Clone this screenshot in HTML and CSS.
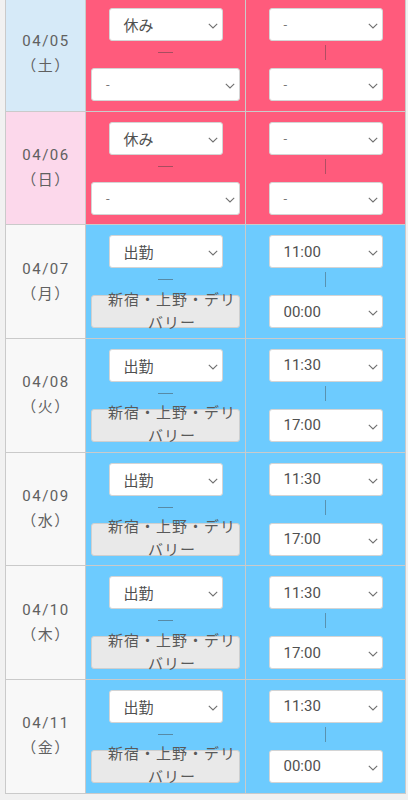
FILE: index.html
```html
<!DOCTYPE html>
<html lang="ja">
<head>
<meta charset="utf-8">
<link rel="stylesheet" href="styles.css">
</head>
<body>
<div class="sheet">
  <div class="date sat"><span>04/05</span><span>（土）</span></div>
  <div class="cell off">
    <div class="sel narrow"><span>休み</span><svg class="chev" viewBox="0 0 10 6"><polyline points="0.8,0.8 5,5 9.2,0.8"/></svg></div>
    <div class="dash"></div>
    <div class="sel wide"><span class="minus">-</span><svg class="chev" viewBox="0 0 10 6"><polyline points="0.8,0.8 5,5 9.2,0.8"/></svg></div>
  </div>
  <div class="cell off">
    <div class="sel narrow"><span class="minus">-</span><svg class="chev" viewBox="0 0 10 6"><polyline points="0.8,0.8 5,5 9.2,0.8"/></svg></div>
    <div class="vline"></div>
    <div class="sel narrow"><span class="minus">-</span><svg class="chev" viewBox="0 0 10 6"><polyline points="0.8,0.8 5,5 9.2,0.8"/></svg></div>
  </div>

  <div class="date sun"><span>04/06</span><span>（日）</span></div>
  <div class="cell off">
    <div class="sel narrow"><span>休み</span><svg class="chev" viewBox="0 0 10 6"><polyline points="0.8,0.8 5,5 9.2,0.8"/></svg></div>
    <div class="dash"></div>
    <div class="sel wide"><span class="minus">-</span><svg class="chev" viewBox="0 0 10 6"><polyline points="0.8,0.8 5,5 9.2,0.8"/></svg></div>
  </div>
  <div class="cell off">
    <div class="sel narrow"><span class="minus">-</span><svg class="chev" viewBox="0 0 10 6"><polyline points="0.8,0.8 5,5 9.2,0.8"/></svg></div>
    <div class="vline"></div>
    <div class="sel narrow"><span class="minus">-</span><svg class="chev" viewBox="0 0 10 6"><polyline points="0.8,0.8 5,5 9.2,0.8"/></svg></div>
  </div>

  <div class="date"><span>04/07</span><span>（月）</span></div>
  <div class="cell on">
    <div class="sel narrow"><span>出勤</span><svg class="chev" viewBox="0 0 10 6"><polyline points="0.8,0.8 5,5 9.2,0.8"/></svg></div>
    <div class="dash"></div>
    <div class="shop">新宿・上野・デリバリー</div>
  </div>
  <div class="cell on">
    <div class="sel narrow"><span>11:00</span><svg class="chev" viewBox="0 0 10 6"><polyline points="0.8,0.8 5,5 9.2,0.8"/></svg></div>
    <div class="vline"></div>
    <div class="sel narrow"><span>00:00</span><svg class="chev" viewBox="0 0 10 6"><polyline points="0.8,0.8 5,5 9.2,0.8"/></svg></div>
  </div>

  <div class="date"><span>04/08</span><span>（火）</span></div>
  <div class="cell on">
    <div class="sel narrow"><span>出勤</span><svg class="chev" viewBox="0 0 10 6"><polyline points="0.8,0.8 5,5 9.2,0.8"/></svg></div>
    <div class="dash"></div>
    <div class="shop">新宿・上野・デリバリー</div>
  </div>
  <div class="cell on">
    <div class="sel narrow"><span>11:30</span><svg class="chev" viewBox="0 0 10 6"><polyline points="0.8,0.8 5,5 9.2,0.8"/></svg></div>
    <div class="vline"></div>
    <div class="sel narrow"><span>17:00</span><svg class="chev" viewBox="0 0 10 6"><polyline points="0.8,0.8 5,5 9.2,0.8"/></svg></div>
  </div>

  <div class="date"><span>04/09</span><span>（水）</span></div>
  <div class="cell on">
    <div class="sel narrow"><span>出勤</span><svg class="chev" viewBox="0 0 10 6"><polyline points="0.8,0.8 5,5 9.2,0.8"/></svg></div>
    <div class="dash"></div>
    <div class="shop">新宿・上野・デリバリー</div>
  </div>
  <div class="cell on">
    <div class="sel narrow"><span>11:30</span><svg class="chev" viewBox="0 0 10 6"><polyline points="0.8,0.8 5,5 9.2,0.8"/></svg></div>
    <div class="vline"></div>
    <div class="sel narrow"><span>17:00</span><svg class="chev" viewBox="0 0 10 6"><polyline points="0.8,0.8 5,5 9.2,0.8"/></svg></div>
  </div>

  <div class="date"><span>04/10</span><span>（木）</span></div>
  <div class="cell on">
    <div class="sel narrow"><span>出勤</span><svg class="chev" viewBox="0 0 10 6"><polyline points="0.8,0.8 5,5 9.2,0.8"/></svg></div>
    <div class="dash"></div>
    <div class="shop">新宿・上野・デリバリー</div>
  </div>
  <div class="cell on">
    <div class="sel narrow"><span>11:30</span><svg class="chev" viewBox="0 0 10 6"><polyline points="0.8,0.8 5,5 9.2,0.8"/></svg></div>
    <div class="vline"></div>
    <div class="sel narrow"><span>17:00</span><svg class="chev" viewBox="0 0 10 6"><polyline points="0.8,0.8 5,5 9.2,0.8"/></svg></div>
  </div>

  <div class="date"><span>04/11</span><span>（金）</span></div>
  <div class="cell on">
    <div class="sel narrow"><span>出勤</span><svg class="chev" viewBox="0 0 10 6"><polyline points="0.8,0.8 5,5 9.2,0.8"/></svg></div>
    <div class="dash"></div>
    <div class="shop">新宿・上野・デリバリー</div>
  </div>
  <div class="cell on">
    <div class="sel narrow"><span>11:30</span><svg class="chev" viewBox="0 0 10 6"><polyline points="0.8,0.8 5,5 9.2,0.8"/></svg></div>
    <div class="vline"></div>
    <div class="sel narrow"><span>00:00</span><svg class="chev" viewBox="0 0 10 6"><polyline points="0.8,0.8 5,5 9.2,0.8"/></svg></div>
  </div>
</div>
</body>
</html>
```

FILE: styles.css
```css
html, body {
  margin: 0;
  padding: 0;
  background: #f1f1f1;
}
body {
  font-family: Roboto, "Noto Sans CJK JP", sans-serif;
  color: #555;
  overflow: hidden;
}
.sheet {
  margin: -3px 0 0 5px;
  width: 401px;
  box-sizing: border-box;
  padding: 1px;
  background: #cacaca;
  display: grid;
  grid-template-columns: 79px 159px 159px;
  grid-auto-rows: 112.7px;
  gap: 1px;
}
.date {
  background: #f8f8f8;
  display: flex;
  flex-direction: column;
  align-items: center;
  justify-content: center;
  font-size: 15px;
  line-height: 25px;
  letter-spacing: 1.5px;
  color: #606060;
  padding-left: 1px;
}
.date.sat { background: #d6eaf8; }
.date.sun { background: #fcd8eb; }
.cell {
  display: flex;
  flex-direction: column;
  align-items: center;
  justify-content: center;
}
.cell.off { background: #ff5b7c; }
.cell.on { background: #6dcbfe; }
.sel {
  position: relative;
  box-sizing: border-box;
  height: 33px;
  background: #fff;
  border: 1px solid #d4d4d4;
  border-radius: 3px;
  display: flex;
  align-items: center;
  padding-left: 14px;
  font-size: 15px;
  color: #505050;
  flex-shrink: 0;
}
.sel.narrow { width: 114px; }
.sel.wide { width: 149px; }
.minus { color: #777; font-size: 13px; }
.chev {
  position: absolute;
  right: 4px;
  top: 14px;
  width: 10px;
  height: 6px;
  fill: none;
  stroke: #707070;
  stroke-width: 1.1;
}
.dash {
  height: 27px;
  width: 15px;
  flex-shrink: 0;
  display: flex;
  align-items: flex-start;
}
.dash::before {
  content: "";
  display: block;
  width: 15px;
  height: 1px;
  margin-top: 11px;
  background: rgba(60, 60, 60, 0.45);
}
.vline {
  height: 27px;
  width: 2px;
  flex-shrink: 0;
  display: flex;
  justify-content: center;
}
.vline::before {
  content: "";
  display: block;
  width: 1px;
  height: 15px;
  margin-top: 4px;
  background: rgba(60, 60, 60, 0.4);
}
.shop {
  box-sizing: border-box;
  width: 149px;
  height: 33px;
  flex-shrink: 0;
  background: #e9e9e9;
  border: 1px solid #cfcfcf;
  border-radius: 3px;
  padding: 0 2px 0 15px;
  display: flex;
  align-items: center;
  justify-content: center;
  text-align: center;
  font-size: 15px;
  line-height: 23px;
  letter-spacing: 1px;
  color: #595959;
}
```
